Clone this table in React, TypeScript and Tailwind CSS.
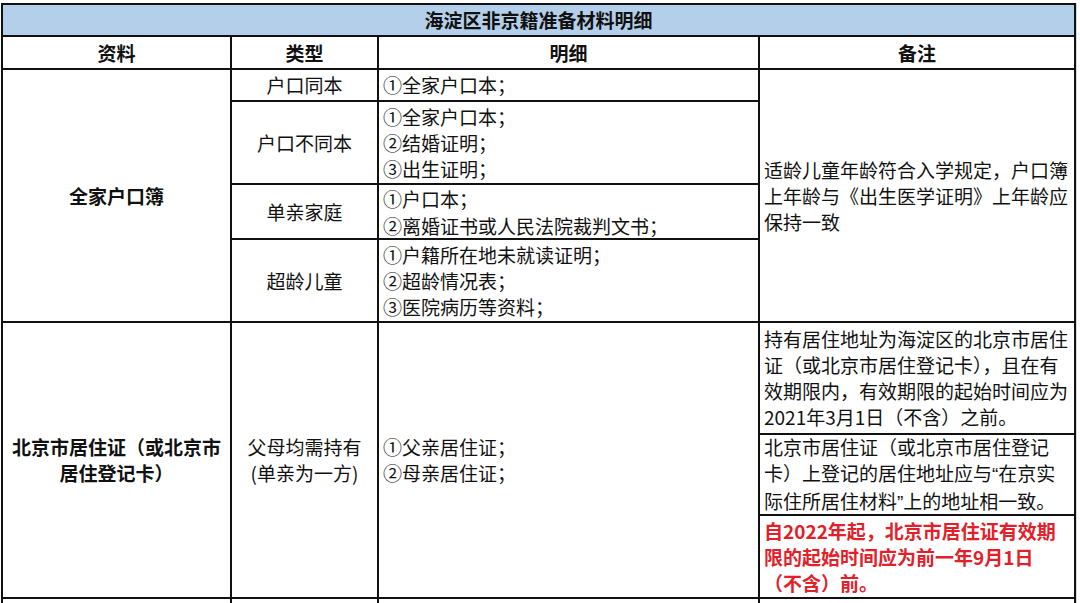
import React from 'react';

type Lines = React.ReactNode[];

const Cell = ({
  lines,
  bold = false,
  center = false,
  red = false,
  className = '',
}: {
  lines: Lines;
  bold?: boolean;
  center?: boolean;
  red?: boolean;
  className?: string;
}) => (
  <div
    className={`bg-white flex flex-col justify-center px-[4px] leading-[26px] ${
      center ? 'items-center text-center' : 'items-start text-left'
    } ${bold ? 'font-bold' : 'font-normal'} ${red ? 'text-[#e3202a]' : 'text-[#111]'} ${className}`}
  >
    {lines.map((l, i) => (
      <div key={i} className="whitespace-nowrap">
        {l}
      </div>
    ))}
  </div>
);

// narrow (latin) quotation marks, as in the original sheet
const Q = ({ children }: { children: string }) => (
  <span className="font-['Liberation_Sans',sans-serif]">{children}</span>
);

export default function App() {
  return (
    <div className="w-[1080px] h-[603px] overflow-hidden bg-white font-['Noto_Sans_CJK_SC','Noto_Sans',sans-serif] text-[19px]">
      <div className="flex pt-[3px] pl-[1px]">
        <div className="grid grid-cols-[227px_145px_379px_314px] grid-rows-[30px_31px_30px_81px_53px_81px_110px_79px_81px_40px] gap-[2px] p-[2px] bg-[#111]">
          {/* Title */}
          <div className="col-span-4 bg-[#b4cfe9] flex items-center justify-center font-bold text-[#111]">
            海淀区非京籍准备材料明细
          </div>

          {/* Header */}
          <Cell lines={['资料']} bold center />
          <Cell lines={['类型']} bold center />
          <Cell lines={['明细']} bold center />
          <Cell lines={['备注']} bold center />

          {/* 全家户口簿 */}
          <Cell lines={['全家户口簿']} bold center className="row-span-4" />
          <Cell lines={['户口同本']} center />
          <Cell lines={['①全家户口本；']} />
          <Cell
            lines={[
              '适龄儿童年龄符合入学规定，户口簿',
              '上年龄与《出生医学证明》上年龄应',
              '保持一致',
            ]}
            className="row-span-4"
          />

          <Cell lines={['户口不同本']} center />
          <Cell lines={['①全家户口本；', '②结婚证明；', '③出生证明；']} />

          <Cell lines={['单亲家庭']} center />
          <Cell lines={['①户口本；', '②离婚证书或人民法院裁判文书；']} className="leading-[27px]" />

          <Cell lines={['超龄儿童']} center />
          <Cell lines={['①户籍所在地未就读证明；', '②超龄情况表；', '③医院病历等资料；']} />

          {/* 北京市居住证 */}
          <Cell lines={['北京市居住证（或北京市', '居住登记卡）']} bold center className="row-span-3" />
          <Cell lines={['父母均需持有', '(单亲为一方)']} center className="row-span-3" />
          <Cell lines={['①父亲居住证；', '②母亲居住证；']} className="row-span-3" />
          <Cell
            lines={[
              '持有居住地址为海淀区的北京市居住',
              '证（或北京市居住登记卡），且在有',
              '效期限内，有效期限的起始时间应为',
              '2021年3月1日（不含）之前。',
            ]}
            className="leading-[26.7px]"
          />
          <Cell
            lines={[
              '北京市居住证（或北京市居住登记',
              <>卡）上登记的居住地址应与<Q>“</Q>在京实</>,
              <>际住所居住材料<Q>”</Q>上的地址相一致。</>,
            ]}
          />
          <Cell
            lines={['自2022年起，北京市居住证有效期', '限的起始时间应为前一年9月1日', '（不含）前。']}
            bold
            red
          />

          {/* next row, cut off */}
          <div className="bg-white" />
          <div className="bg-white" />
          <div className="bg-white" />
          <div className="bg-white" />
        </div>
        <div className="w-[4px] border-l border-[#d8d8d8]" />
      </div>
    </div>
  );
}
